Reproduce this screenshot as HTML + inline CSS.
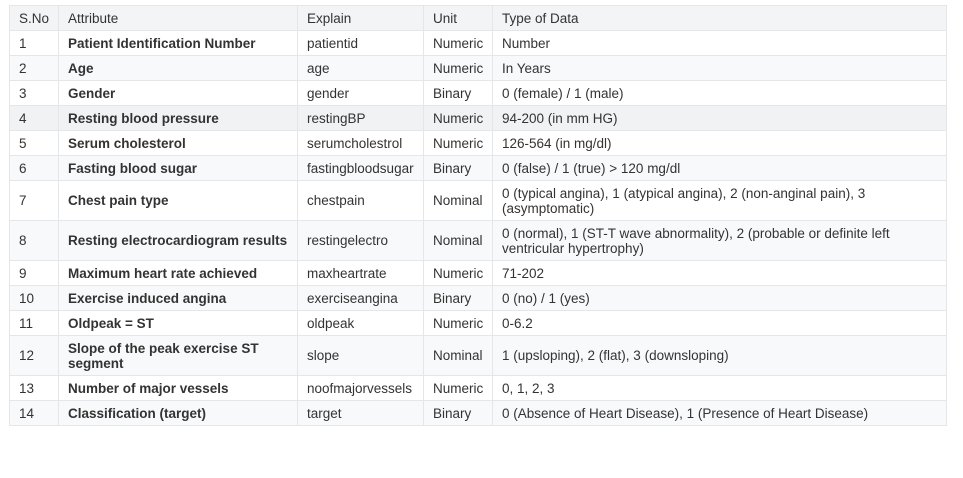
<!DOCTYPE html>
<html><head><style>
body{margin:0;background:#fff;font-family:"Liberation Sans",Arial,sans-serif;font-size:13.5px;color:#333;}
table{position:absolute;left:9px;top:5px;width:938px;border-collapse:collapse;table-layout:fixed;}
td,th{border:1px solid #e4e6e8;padding:0 9px;line-height:15px;text-align:left;font-weight:normal;vertical-align:middle;}
th{background:#f3f4f5;height:23px;}
thead tr{height:25px}
tr{height:25px}
tr.t{height:40px}
tbody tr:nth-child(even){background:#f8f9fa}
tr.h{background:#f1f2f3!important}
td:nth-child(2){font-weight:bold}
</style></head><body>
<table>
<colgroup><col style="width:49px"><col style="width:239px"><col style="width:126px"><col style="width:69px"><col></colgroup>
<thead><tr><th>S.No</th><th>Attribute</th><th>Explain</th><th>Unit</th><th>Type of Data</th></tr></thead>
<tbody>
<tr><td>1</td><td>Patient Identification Number</td><td>patientid</td><td>Numeric</td><td>Number</td></tr>
<tr><td>2</td><td>Age</td><td>age</td><td>Numeric</td><td>In Years</td></tr>
<tr><td>3</td><td>Gender</td><td>gender</td><td>Binary</td><td>0 (female) / 1 (male)</td></tr>
<tr class="h"><td>4</td><td>Resting blood pressure</td><td>restingBP</td><td>Numeric</td><td>94-200 (in mm HG)</td></tr>
<tr><td>5</td><td>Serum cholesterol</td><td>serumcholestrol</td><td>Numeric</td><td>126-564 (in mg/dl)</td></tr>
<tr><td>6</td><td>Fasting blood sugar</td><td>fastingbloodsugar</td><td>Binary</td><td>0 (false) / 1 (true) &gt; 120 mg/dl</td></tr>
<tr class="t"><td>7</td><td>Chest pain type</td><td>chestpain</td><td>Nominal</td><td>0 (typical angina), 1 (atypical angina), 2 (non-anginal pain), 3 (asymptomatic)</td></tr>
<tr class="t"><td>8</td><td>Resting electrocardiogram results</td><td>restingelectro</td><td>Nominal</td><td>0 (normal), 1 (ST-T wave abnormality), 2 (probable or definite left ventricular hypertrophy)</td></tr>
<tr><td>9</td><td>Maximum heart rate achieved</td><td>maxheartrate</td><td>Numeric</td><td>71-202</td></tr>
<tr><td>10</td><td>Exercise induced angina</td><td>exerciseangina</td><td>Binary</td><td>0 (no) / 1 (yes)</td></tr>
<tr><td>11</td><td>Oldpeak = ST</td><td>oldpeak</td><td>Numeric</td><td>0-6.2</td></tr>
<tr class="t"><td>12</td><td>Slope of the peak exercise ST segment</td><td>slope</td><td>Nominal</td><td>1 (upsloping), 2 (flat), 3 (downsloping)</td></tr>
<tr><td>13</td><td>Number of major vessels</td><td>noofmajorvessels</td><td>Numeric</td><td>0, 1, 2, 3</td></tr>
<tr><td>14</td><td>Classification (target)</td><td>target</td><td>Binary</td><td>0 (Absence of Heart Disease), 1 (Presence of Heart Disease)</td></tr>
</tbody></table>
</body></html>
